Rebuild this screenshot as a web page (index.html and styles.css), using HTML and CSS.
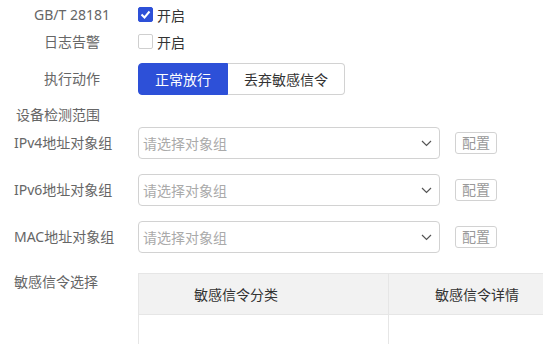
FILE: index.html
```html
<!DOCTYPE html>
<html lang="zh-CN">
<head>
    <meta charset="UTF-8">
    <title>敏感信令配置</title>
    <link rel="stylesheet" href="styles.css">
</head>
<body>
    <div class="form">
        <!-- 开关 -->
        <div class="row switch-row">
            <div class="label label-center">GB/T 28181</div>
            <label class="check"><span class="box checked"><svg width="11" height="9" viewBox="0 0 11 9"><path d="M1.5 4.5l3 3 5-6" fill="none" stroke="#fff" stroke-width="2"/></svg></span>开启</label>
        </div>
        <div class="row switch-row">
            <div class="label label-center">日志告警</div>
            <label class="check"><span class="box"></span>开启</label>
        </div>

        <!-- 执行动作 -->
        <div class="row action-row">
            <div class="label label-center">执行动作</div>
            <div class="btn-group">
                <button class="seg active">正常放行</button>
                <button class="seg">丢弃敏感信令</button>
            </div>
        </div>

        <div class="section-title">设备检测范围</div>

        <div class="row select-row">
            <div class="label label-left">IPv4地址对象组</div>
            <div class="select"><span>请选择对象组</span><svg class="arrow" width="11" height="7" viewBox="0 0 11 7"><path d="M1 1l4.5 4.5L10 1" fill="none" stroke="#555" stroke-width="1.2"/></svg></div>
            <button class="cfg">配置</button>
        </div>
        <div class="row select-row">
            <div class="label label-left">IPv6地址对象组</div>
            <div class="select"><span>请选择对象组</span><svg class="arrow" width="11" height="7" viewBox="0 0 11 7"><path d="M1 1l4.5 4.5L10 1" fill="none" stroke="#555" stroke-width="1.2"/></svg></div>
            <button class="cfg">配置</button>
        </div>
        <div class="row select-row">
            <div class="label label-left">MAC地址对象组</div>
            <div class="select"><span>请选择对象组</span><svg class="arrow" width="11" height="7" viewBox="0 0 11 7"><path d="M1 1l4.5 4.5L10 1" fill="none" stroke="#555" stroke-width="1.2"/></svg></div>
            <button class="cfg">配置</button>
        </div>

        <!-- 敏感信令 -->
        <div class="row table-row">
            <div class="label label-left">敏感信令选择</div>
            <table class="sig-table">
                <thead>
                    <tr>
                        <th class="col-type">敏感信令分类</th>
                        <th class="col-detail">敏感信令详情</th>
                    </tr>
                </thead>
                <tbody>
                    <tr><td></td><td></td></tr>
                </tbody>
            </table>
        </div>
    </div>
</body>
</html>
```

FILE: styles.css
```css
/* General */
body {
    margin: 0;
    font-family: "Noto Sans", "Noto Sans CJK SC", sans-serif;
    font-size: 14px;
    color: #333;
    background: #fff;
    overflow: hidden;
}
.form {
    padding-top: 1px;
}
.row {
    display: flex;
    align-items: center;
}
.label {
    width: 138px;
    flex-shrink: 0;
    box-sizing: border-box;
    color: #666;
    line-height: 20px;
}
.label-center {
    text-align: center;
    padding-left: 6px;
}
.label-left {
    padding-left: 14px;
}

/* Switches */
.switch-row {
    height: 27px;
}
.check {
    display: flex;
    align-items: center;
    gap: 4px;
    color: #333;
}
.box {
    width: 15px;
    height: 15px;
    box-sizing: border-box;
    border: 1px solid #cfcfcf;
    border-radius: 2px;
    display: flex;
    align-items: center;
    justify-content: center;
}
.box.checked {
    background: #2d50d8;
    border-color: #2d50d8;
}

/* Button group */
.action-row {
    margin-top: 8px;
}
.btn-group {
    display: flex;
}
.seg {
    height: 32px;
    padding: 0 16px;
    font: inherit;
    color: #333;
    background: #fff;
    border: 1px solid #d2d2d2;
    border-left: none;
    border-radius: 0 4px 4px 0;
}
.seg.active {
    color: #fff;
    background: #2d50d8;
    border: 1px solid #2d50d8;
    border-radius: 4px 0 0 4px;
}

.section-title {
    margin: 10px 0 2px;
    padding-left: 16px;
    line-height: 20px;
    color: #666;
}

/* Selects */
.select-row {
    margin-bottom: 15px;
}
.select {
    width: 302px;
    height: 32px;
    box-sizing: border-box;
    border: 1px solid #d2d2d2;
    border-radius: 4px;
    padding: 0 7px 0 4px;
    display: flex;
    align-items: center;
    justify-content: space-between;
    color: #aaa;
}
.cfg {
    margin-left: 15px;
    height: 22px;
    padding: 0 6px;
    font: inherit;
    line-height: 20px;
    color: #999;
    background: #fff;
    border: 1px solid #d2d2d2;
    border-radius: 3px;
}

/* Table */
.table-row {
    margin-top: 5px;
    align-items: flex-start;
}
.table-row .label {
    margin-top: 4px;
}
.sig-table {
    margin-top: 5px;
    border-collapse: collapse;
    flex-shrink: 0;
    width: 430px;
    table-layout: fixed;
}
.sig-table th {
    height: 40px;
    padding: 0;
    font-weight: normal;
    white-space: nowrap;
    color: #333;
    background: #f2f2f2;
    border: 1px solid #e6e6e6;
    text-align: left;
}
.sig-table td {
    height: 40px;
    border: 1px solid #e6e6e6;
}
.col-type {
    width: 194px;
    padding-left: 55px !important;
}
.col-detail {
    padding-left: 46px !important;
}
```
